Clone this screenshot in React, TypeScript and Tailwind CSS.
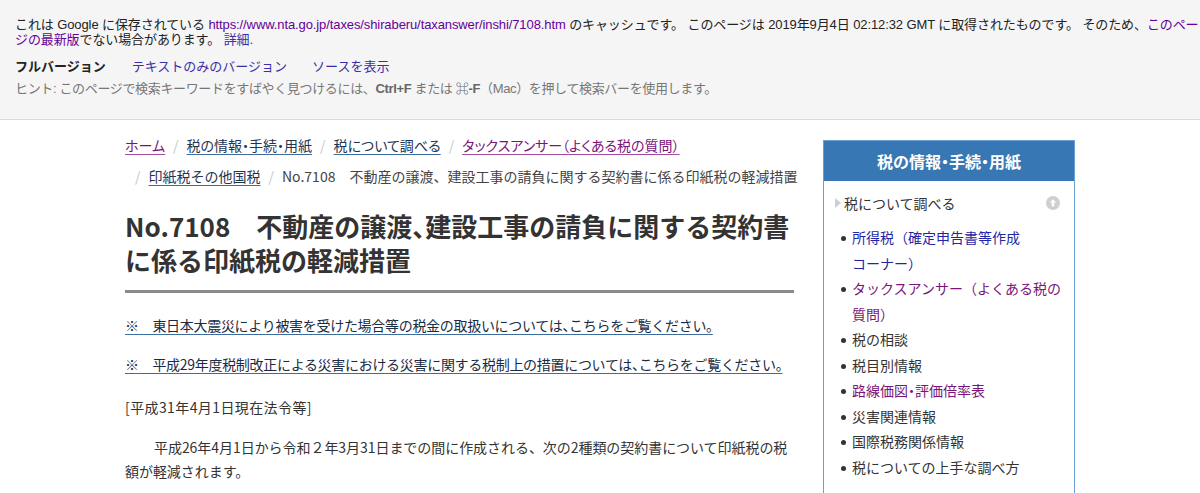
import React from "react";

const jp = { fontFamily: '"Noto Sans CJK JP", "Noto Sans", sans-serif' };
const ar = { fontFamily: '"Liberation Sans", "Noto Sans CJK JP", sans-serif' };

function Sep() {
  return <span className="mx-[8px] text-[#c8c8c8]">/</span>;
}

const sideItems: { t: React.ReactNode; c: string }[] = [
  { t: <>所得税（確定申告書等作成<br />コーナー）</>, c: "text-[#1f27a6]" },
  { t: <>タックスアンサー（よくある税の<br />質問）</>, c: "text-[#7b1478]" },
  { t: "税の相談", c: "text-[#333]" },
  { t: "税目別情報", c: "text-[#333]" },
  { t: "路線価図・評価倍率表", c: "text-[#7b1478] [font-feature-settings:'halt']" },
  { t: "災害関連情報", c: "text-[#333]" },
  { t: "国際税務関係情報", c: "text-[#333]" },
  { t: "税についての上手な調べ方", c: "text-[#333]" },
];

export default function App() {
  return (
    <div className="w-[1200px] h-[493px] overflow-hidden bg-white">
      <div
        className="bg-[#f5f5f5] border-b border-[#dcdcdc] h-[120px] pl-[15px] pt-[17px] text-[13px] leading-[15px] text-[#222]"
        style={ar}
      >
        <div className="tracking-[-0.1px]">
          これは Google に保存されている{" "}
          <span className="text-[#660099]">https://www.nta.go.jp/taxes/shiraberu/taxanswer/inshi/7108.htm</span>{" "}
          のキャッシュです。 このページは 2019年9月4日 02:12:32 GMT に取得されたものです。 そのため、
          <span className="text-[#660099]">
            このペー
            <br />
            ジの最新版
          </span>
          でない場合があります。 <span className="text-[#3a2fa8]">詳細.</span>
        </div>
        <div className="mt-[12px] flex">
          <span className="font-bold text-[#222]">フルバージョン</span>
          <span className="ml-[26px] text-[#3a2fa8]">テキストのみのバージョン</span>
          <span className="ml-[25px] text-[#3a2fa8]">ソースを表示</span>
        </div>
        <div className="mt-[7px] text-[#777] tracking-[-0.35px]">
          ヒント: このページで検索キーワードをすばやく見つけるには、<b className="text-[#666]">Ctrl+F</b> または{" "}
          <b className="text-[#666]">⌘-F</b>（Mac）を押して検索バーを使用します。
        </div>
      </div>

      <div className="mx-auto w-[950px] flex gap-[29px] pt-[10px]" style={jp}>
        <div className="w-[669px] shrink-0 text-[14px] text-[#333]">
          <div className="leading-[31px] whitespace-nowrap">
            <div className="[font-feature-settings:'palt']">
              <span className="text-[#7b1478] underline decoration-[#a04aa0] underline-offset-[3px]">ホーム</span>
              <Sep />
              <span className="text-[#1f3550] underline decoration-[#3d6d9e] underline-offset-[3px]">税の情報・手続・用紙</span>
              <Sep />
              <span className="text-[#1f3550] underline decoration-[#3d6d9e] underline-offset-[3px]">税について調べる</span>
              <Sep />
              <span className="text-[#7b1478] underline decoration-[#a04aa0] underline-offset-[3px]">タックスアンサー（よくある税の質問）</span>
            </div>
            <div className="pl-[2px]">
              <Sep />
              <span className="text-[#1f3550] underline decoration-[#3d6d9e] underline-offset-[3px]">印紙税その他国税</span>
              <Sep />
              <span className="text-[#444]">No.7108　不動産の譲渡、建設工事の請負に関する契約書に係る印紙税の軽減措置</span>
            </div>
          </div>

          <h1 className="mt-[17px] text-[26px] leading-[34px] font-bold text-[#333] whitespace-nowrap [font-feature-settings:'halt']">
            No.7108　不動産の譲渡、建設工事の請負に関する契約書
            <br />
            に係る印紙税の軽減措置
          </h1>
          <div className="mt-[13px] h-[3px] bg-[#8a8a8a]" />

          <div className="mt-[22px] leading-[20px] whitespace-nowrap">
            <div className="tracking-[-0.3px] [font-feature-settings:'halt']">
              <span className="text-[#1a2b42] underline decoration-[#3d6d9e] underline-offset-[3px]">
                ※　東日本大震災により被害を受けた場合等の税金の取扱いについては、こちらをご覧ください。
              </span>
            </div>
            <div className="mt-[19px] tracking-[-0.3px] [font-feature-settings:'halt']">
              <span className="text-[#1a2b42] underline decoration-[#3d6d9e] underline-offset-[3px]">
                ※　平成29年度税制改正による災害における災害に関する税制上の措置については、こちらをご覧ください。
              </span>
            </div>
            <div className="mt-[23px] text-[#333] tracking-[0.4px]">[平成31年4月1日現在法令等]</div>
          </div>

          <p className="mt-[18px] leading-[24px] text-[#333] whitespace-nowrap tracking-[-0.05px]">
            <span className="inline-block w-[29px]" />
            平成26年4月1日から令和２年3月31日までの間に作成される、次の2種類の契約書について印紙税の税
            <br />
            額が軽減されます。
          </p>
        </div>

        <div className="w-[252px] shrink-0 self-start border border-[#6b9fd2] mt-[10px]">
          <div className="h-[40px] bg-[#3778b4] flex items-center justify-center text-white font-bold text-[16px] [font-feature-settings:'halt']">
            税の情報・手続・用紙
          </div>
          <div className="pt-[10px] pb-[20px]">
            <div className="flex items-center h-[24px] pl-[11px] pr-[14px] text-[14px] text-[#333]">
              <svg width="6" height="10" viewBox="0 0 6 10" className="mr-[3px]">
                <path d="M0 0 L6 5 L0 10 Z" fill="#cfcfcf" />
              </svg>
              <span>税について調べる</span>
              <span className="ml-auto">
                <svg width="14" height="14" viewBox="0 0 14 14">
                  <circle cx="7" cy="7" r="7" fill="#cfcfcf" />
                  <path d="M7 3.2 L10.2 6.6 H8.2 V10.6 H5.8 V6.6 H3.8 Z" fill="#fff" />
                </svg>
              </span>
            </div>
            <ul className="mt-[10px] pl-[17px] text-[14px] leading-[25.5px] whitespace-nowrap">
              {sideItems.map((it, i) => (
                <li key={i} className="flex">
                  <span className="w-[11px] shrink-0 flex justify-start pt-[11px]">
                    <span className="block w-[5px] h-[5px] rounded-full bg-[#333]" />
                  </span>
                  <span className={it.c}>{it.t}</span>
                </li>
              ))}
            </ul>
          </div>
        </div>
      </div>
    </div>
  );
}
